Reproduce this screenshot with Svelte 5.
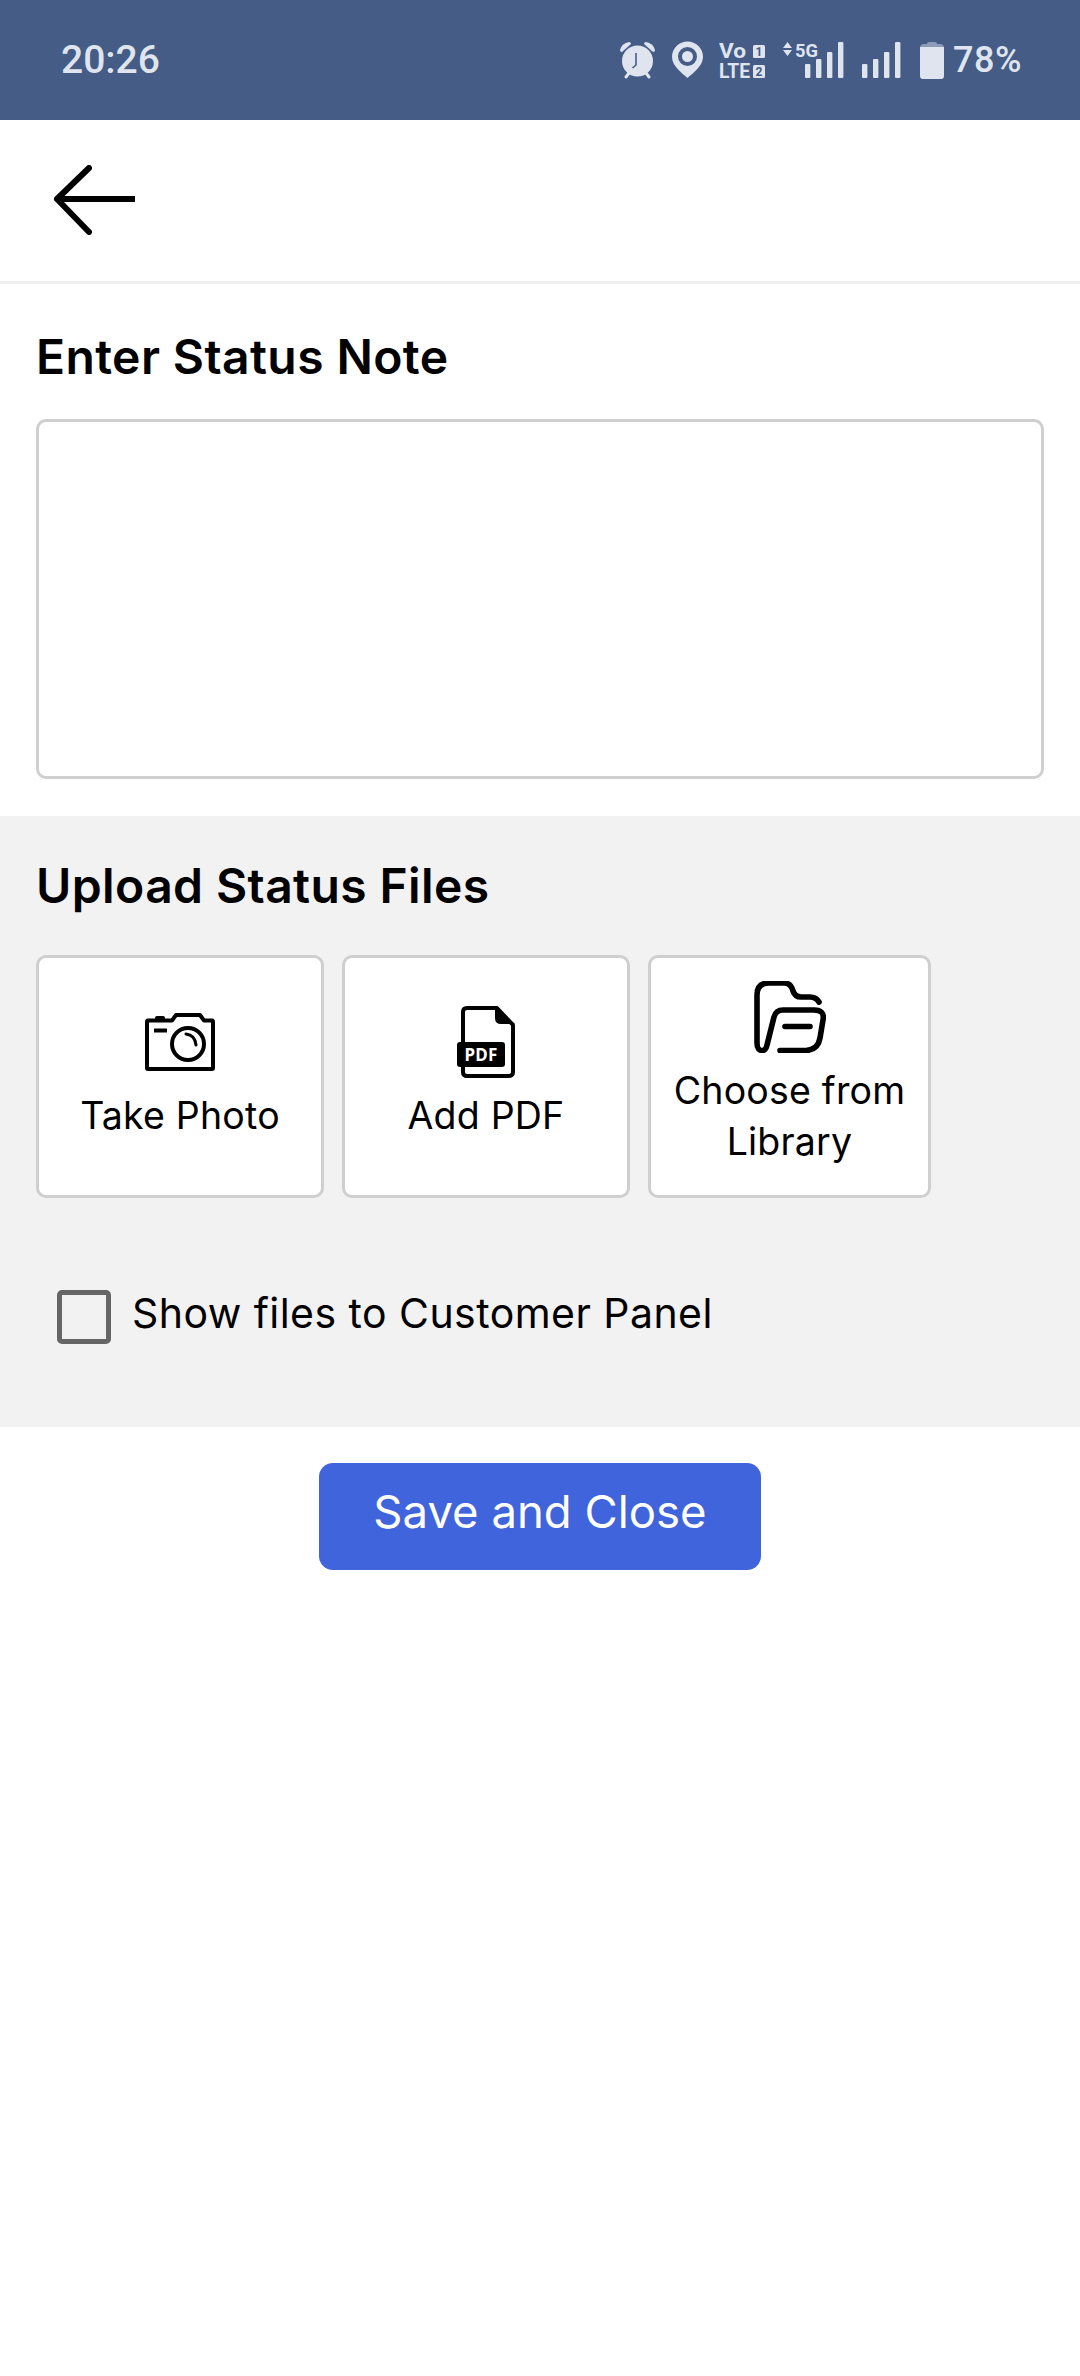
<script>
  let note = $state('');
  let showToCustomer = $state(false);
</script>

<div class="page">
  <div class="statusbar">
    <span class="time">20:26</span>
    <div class="status-icons">
      <svg width="37" height="38" viewBox="0 0 37 38">
        <circle cx="18.5" cy="20" r="15.5" fill="#dfe4ee" />
        <path d="M1 9 Q3 2 10 1 Q12 1 12 3 L3 11 Q1 11 1 9Z" fill="#dfe4ee" />
        <path d="M36 9 Q34 2 27 1 Q25 1 25 3 L34 11 Q36 11 36 9Z" fill="#dfe4ee" />
        <path d="M7 36 L10 32 M30 36 L27 32" stroke="#dfe4ee" stroke-width="3" stroke-linecap="round" />
        <path d="M17 12 L17 24 L13.5 27" fill="none" stroke="#445c86" stroke-width="1.6" />
      </svg>
      <svg width="31" height="38" viewBox="0 0 31 38">
        <path d="M15.5 37 C10 32 0 25 0 16 A15.5 15.5 0 0 1 31 16 C31 25 21 32 15.5 37Z" fill="#dfe4ee" />
        <circle cx="15.5" cy="15.5" r="7.5" fill="none" stroke="#445c86" stroke-width="4" />
      </svg>
      <svg class="txt" width="46" height="46" viewBox="0 -4 46 46">
        <text x="0" y="17" font-size="20" textLength="27" lengthAdjust="spacingAndGlyphs">Vo</text>
        <text x="0" y="37" font-size="20" textLength="31" lengthAdjust="spacingAndGlyphs">LTE</text>
        <rect x="34" y="4" width="12" height="13" rx="1.5" fill="#dfe4ee" />
        <rect x="34" y="24" width="12" height="13" rx="1.5" fill="#dfe4ee" />
        <text class="dark" x="40" y="15" font-size="12" text-anchor="middle">1</text>
        <text class="dark" x="40" y="35" font-size="12" text-anchor="middle">2</text>
      </svg>
      <svg class="txt" width="64" height="46" viewBox="0 -4 64 46">
        <path d="M2 7 L6.5 1 L11 7Z M2 9 L6.5 15 L11 9Z" fill="#dfe4ee" />
        <text x="14" y="16" font-size="19" textLength="23" lengthAdjust="spacingAndGlyphs">5G</text>
        <rect x="24" y="23" width="5.4" height="14" rx="1" fill="#dfe4ee" />
        <rect x="35" y="18" width="5.4" height="19" rx="1" fill="#dfe4ee" />
        <rect x="46" y="11" width="5.4" height="26" rx="1" fill="#dfe4ee" />
        <rect x="57" y="1" width="5.4" height="36" rx="1" fill="#dfe4ee" />
      </svg>
      <svg width="43" height="38" viewBox="0 0 43 38">
        <rect x="1" y="23" width="5.4" height="14" rx="1" fill="#dfe4ee" />
        <rect x="12" y="18" width="5.4" height="19" rx="1" fill="#dfe4ee" />
        <rect x="23" y="11" width="5.4" height="26" rx="1" fill="#dfe4ee" />
        <rect x="34" y="1" width="5.4" height="36" rx="1" fill="#dfe4ee" />
      </svg>
      <div class="battery">
        <svg width="24" height="38" viewBox="0 0 24 38">
          <path d="M7 3 Q7 1 9 1 L15 1 Q17 1 17 3 L20 3 Q24 3 24 7 L24 7 L0 7 Q0 3 4 3Z" fill="#8d9bb6" />
          <path d="M0 6 L24 6 L24 35 Q24 38 21 38 L3 38 Q0 38 0 35Z" fill="#dfe4ee" />
        </svg>
        <span class="pct">78%</span>
      </div>
    </div>
  </div>

  <header class="topbar">
    <svg width="82" height="70" viewBox="0 0 82 70">
      <path d="M36 3 L4 34 L36 67 M4 34 L81 34" fill="none" stroke="#000" stroke-width="6" stroke-linecap="round" stroke-linejoin="round" />
    </svg>
  </header>

  <section class="note">
    <h2>Enter Status Note</h2>
    <textarea bind:value={note}></textarea>
  </section>

  <section class="upload">
    <h2>Upload Status Files</h2>
    <div class="cards">
      <div class="card">
        <div class="icon">
          <svg width="70" height="58" viewBox="0 0 70 58">
            <path d="M27 7.5 L31 2 L55 2 L59 7.5 L67 7.5 Q68 7.5 68 9 L68 55 Q68 56 67 56 L3 56 Q2 56 2 55 L2 9 Q2 7.5 3 7.5Z" fill="none" stroke="#000" stroke-width="4" stroke-linejoin="round" />
            <rect x="10" y="3" width="10" height="5" rx="2" fill="#000" />
            <path d="M9 17.5 L22 17.5" stroke="#000" stroke-width="4" />
            <circle cx="43" cy="31" r="16" fill="none" stroke="#000" stroke-width="4" />
            <path d="M41 21 Q50 22 51 32" fill="none" stroke="#000" stroke-width="3" stroke-linecap="round" />
          </svg>
        </div>
        <span>Take Photo</span>
      </div>
      <div class="card">
        <div class="icon">
          <svg width="58" height="72" viewBox="0 0 58 72">
            <path d="M40 2 L10 2 Q6 2 6 6 L6 66 Q6 70 10 70 L51 70 Q56 70 56 66 L56 19 Z" fill="none" stroke="#000" stroke-width="4" stroke-linejoin="round" />
            <path d="M38 0 L58 18 L44 18 Q38 18 38 12Z" fill="#000" />
            <rect x="0" y="36" width="48" height="25" rx="3" fill="#000" />
            <text class="pdf" x="24" y="54.5" font-size="17" text-anchor="middle">PDF</text>
          </svg>
        </div>
        <span>Add PDF</span>
      </div>
      <div class="card wide">
        <div class="icon">
          <svg width="72" height="72" viewBox="0 0 72 72">
            <path d="M65 21 Q62 16 56 16 L47 16 Q41 16 39 10 Q37 2 30 2 L15 2 Q3 2 3 14 L3 62 Q3 70 9 69.5 Q12 69 13 64 L20 36 Q22 29 29 29 L60 29 Q71 29 69 39 L66 57 Q64 69 52 69.5 L26 69.5" fill="none" stroke="#000" stroke-width="5.6" stroke-linecap="round" stroke-linejoin="round" />
            <path d="M31 45.5 L56 45.5" stroke="#000" stroke-width="5.6" stroke-linecap="round" />
          </svg>
        </div>
        <span>Choose from Library</span>
      </div>
    </div>
    <label class="check">
      <input type="checkbox" bind:checked={showToCustomer} />
      <span>Show files to Customer Panel</span>
    </label>
  </section>

  <div class="actions">
    <button>Save and Close</button>
  </div>
</div>

<style>
  :global(body) {
    background: #fff;
  }
  .page {
    width: 1080px;
    height: 2376px;
    background: #fff;
    font-family: Inter, "Liberation Sans", sans-serif;
    color: #000;
  }

  .statusbar {
    height: 120px;
    background: #445c86;
    color: #dfe4ee;
    display: flex;
    align-items: center;
    justify-content: space-between;
    padding: 0 58px 0 61px;
    box-sizing: border-box;
    font-family: Roboto, sans-serif;
    font-weight: 500;
  }
  .time {
    font-size: 39px;
  }
  .status-icons {
    display: flex;
    align-items: center;
    gap: 16px;
  }
  .battery {
    display: flex;
    align-items: center;
    gap: 9px;
  }
  .pct {
    font-size: 36px;
    letter-spacing: 0.5px;
  }
  .txt text {
    font-family: Roboto, sans-serif;
    font-weight: 700;
    fill: #dfe4ee;
  }
  .txt text.dark {
    fill: #445c86;
  }

  .topbar {
    height: 164px;
    padding: 0 0 2px 53px;
    box-sizing: border-box;
    display: flex;
    align-items: center;
    border-bottom: 3px solid #f0f0f0;
  }

  h2 {
    margin: 0;
    font-size: 48px;
    letter-spacing: 0.4px;
    line-height: 60px;
    font-weight: 600;
  }

  .note {
    padding: 43px 36px 37px;
  }
  textarea {
    display: block;
    width: 100%;
    height: 360px;
    margin-top: 32px;
    box-sizing: border-box;
    border: 3px solid #cfcfcf;
    border-radius: 10px;
    background: #fff;
    outline: none;
    resize: none;
  }

  .upload {
    background: #f2f2f2;
    height: 611px;
    box-sizing: border-box;
    padding: 40px 36px 0;
  }
  .cards {
    display: flex;
    gap: 18px;
    margin-top: 39px;
  }
  .card {
    width: 288px;
    height: 243px;
    box-sizing: border-box;
    padding: 0 20px 6px;
    background: #fff;
    border: 3px solid #cfcfcf;
    border-radius: 10px;
    display: flex;
    flex-direction: column;
    align-items: center;
    justify-content: center;
    gap: 12px;
    text-align: center;
    font-size: 37.5px;
    letter-spacing: 0.2px;
    line-height: 51px;
  }
  .card.wide {
    width: 283px;
    padding: 0 14px 6px;
  }
  .icon {
    height: 72px;
    display: flex;
    align-items: center;
    justify-content: center;
  }
  .pdf {
    font-family: "Noto Sans", sans-serif;
    font-weight: 700;
    fill: #fff;
  }

  .check {
    display: flex;
    align-items: flex-start;
    gap: 21px;
    margin: 92px 0 0 21px;
    font-size: 41px;
    letter-spacing: 0.45px;
    line-height: 46px;
  }
  input[type="checkbox"] {
    appearance: none;
    width: 54px;
    height: 54px;
    margin: 0;
    flex: none;
    box-sizing: border-box;
    border: 5px solid #666;
    border-radius: 5px;
    background: transparent;
  }

  .actions {
    display: flex;
    justify-content: center;
    padding-top: 36px;
  }
  button {
    width: 442px;
    height: 107px;
    border: none;
    border-radius: 14px;
    background: #4064dc;
    color: #fff;
    font-family: inherit;
    font-size: 45.5px;
    padding: 0 0 10px;
  }
</style>
